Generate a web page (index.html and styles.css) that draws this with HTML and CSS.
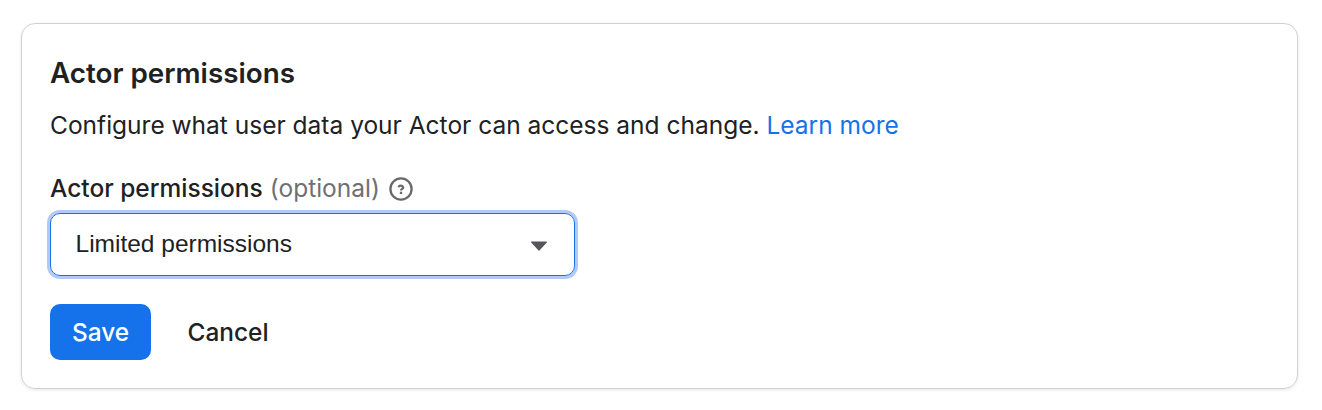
FILE: index.html
```html
<!DOCTYPE html>
<html lang="en">
<head>
<meta charset="utf-8">
<title>Actor permissions</title>
<link rel="stylesheet" href="styles.css">
</head>
<body>
<section class="card">
  <h2 class="title">Actor permissions</h2>
  <p class="description">Configure what user data your Actor can access and change. <a class="link">Learn more</a></p>
  <div class="label"><span class="label-text">Actor permissions <span class="optional">(optional)</span></span>
    <svg class="help" viewBox="0 0 24 24" fill="none" stroke="currentColor" stroke-width="2.3" stroke-linejoin="round"><circle cx="12" cy="12" r="10.6"/><path d="M9.5 10.3a2.4 2.1 0 0 1 4.7.1c0 1.4-2.2 1.5-2.2 3.1"/><path d="M12 14.7v2.3"/></svg>
  </div>
  <div class="select"><span class="value">Limited permissions</span>
    <svg class="caret" viewBox="0 0 18 10"><path d="M1.6 1h14.8L9 9z" fill="currentColor" stroke="currentColor" stroke-width="1.2" stroke-linejoin="round"/></svg>
  </div>
  <div class="actions"><button class="button primary">Save</button><button class="button">Cancel</button></div>
</section>
</body>
</html>
```
FILE: styles.css
```css
* { box-sizing: border-box; }
body { margin: 0; padding: 23px 24px 21px 21px; background: #fff; color: #202123; font-family: Inter, sans-serif; }
.card { width: 1277px; height: 366px; padding: 32px 28px; border: 1px solid #d0d1d3; border-radius: 14px; box-shadow: 0 1px 3px rgba(0, 0, 0, .1); }
.title { margin: 0; font-size: 27.8px; line-height: 34px; font-weight: 600; }
.description { margin: 17px 0 0; font-size: 24.5px; line-height: 36px; }
.link { color: #1672eb; }
.label { display: flex; align-items: center; gap: 9.5px; margin-top: 29px; font-size: 24.5px; line-height: 34px; font-weight: 500; }
.label-text { padding-bottom: 2px; line-height: 32px; }
.optional { margin-left: .5px; color: #6f7073; font-weight: 400; }
.help { width: 24px; height: 24px; color: #68696b; }
.select { display: flex; align-items: center; justify-content: space-between; width: 525px; height: 63px; margin-top: 7px; padding: 0 26px 0 24.5px; border: 1px solid #1672eb; border-radius: 10px; box-shadow: 0 0 0 3px #b5c8fb; }
.value { padding-bottom: 2px; font-family: "Liberation Sans", Arial, sans-serif; font-size: 24.5px; }
.caret { width: 18px; height: 10px; margin-top: 2px; color: #56575a; }
.actions { display: flex; gap: 14.5px; margin-top: 28px; }
.button { height: 56px; padding: 0 22px; border: 0; border-radius: 10px; background: none; color: #202123; font: 500 24.4px Inter, sans-serif; }
.primary { background: #1672eb; color: #fff; }
```
